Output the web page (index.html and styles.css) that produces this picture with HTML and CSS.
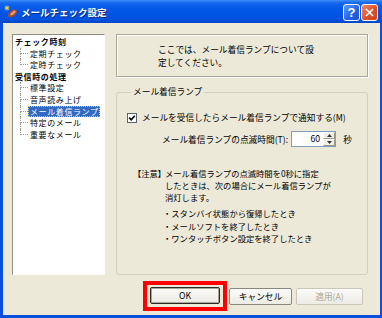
FILE: index.html
```html
<!DOCTYPE html>
<html lang="ja">
  <head>
    <meta charset="UTF-8" />
    <title>メールチェック設定</title>
    <link rel="stylesheet" href="styles.css">
  </head>
  <body>
    <div class="window">
      <div class="titlebar">
        <svg class="app-icon" width="14" height="14" viewBox="0 0 14 14">
          <ellipse cx="8.5" cy="8.5" rx="5.2" ry="3" transform="rotate(-40 8.5 8.5)" fill="#a8492a" />
          <ellipse cx="9" cy="8" rx="3.2" ry="1.3" transform="rotate(-40 9 8)" fill="#f19a68" />
          <path d="M3 0.5v5M0.5 3h5M1.2 1.2l3.6 3.6M4.8 1.2l-3.6 3.6" stroke="#ffe23a" stroke-width="0.9" />
        </svg>
        <span class="title">メールチェック設定</span>
        <div class="caption-buttons">
          <span class="cap-btn help">?</span>
          <span class="cap-btn close">
            <svg width="9" height="9" viewBox="0 0 9 9"><path d="M1 1l7 7M8 1l-7 7" stroke="#fff" stroke-width="1.7" /></svg>
          </span>
        </div>
      </div>

      <div class="face">
        <div class="main">
          <!-- left tree -->
          <ul class="tree">
            <li>
              <span class="root">チェック時刻</span>
              <ul class="children">
                <li>定期チェック</li>
                <li>定時チェック</li>
              </ul>
            </li>
            <li>
              <span class="root">受信時の処理</span>
              <ul class="children">
                <li>標準設定</li>
                <li>音声読み上げ</li>
                <li><span class="selected">メール着信ランプ</span></li>
                <li>特定のメール</li>
                <li>重要なメール</li>
              </ul>
            </li>
          </ul>

          <div class="panel">
            <div class="intro">ここでは、メール着信ランプについて設<br>定してください。</div>

            <fieldset class="group">
              <legend>メール着信ランプ</legend>
              <label class="check-row">
                <svg class="checkbox" width="10" height="10" viewBox="0 0 10 10">
                  <rect x="0.5" y="0.5" width="9" height="9" fill="#fff" stroke="#5a6470" />
                  <path d="M2.2 4.6l2 2.1 3.6-4" fill="none" stroke="#000" stroke-width="1.6" />
                </svg>
                メールを受信したらメール着信ランプで通知する(M)
              </label>

              <div class="time-row">
                <span>メール着信ランプの点滅時間(T):</span>
                <span class="spin">
                  <span class="spin-value">60</span>
                  <span class="spin-buttons">
                    <span class="spin-btn"><svg width="5" height="3" viewBox="0 0 5 3"><path d="M0 3L2.5 0 5 3z" fill="#333" /></svg></span>
                    <span class="spin-btn"><svg width="5" height="3" viewBox="0 0 5 3"><path d="M0 0L2.5 3 5 0z" fill="#333" /></svg></span>
                  </span>
                </span>
                <span class="unit">秒</span>
              </div>

              <div class="note">
                <span class="note-label">【注意】</span>
                <p>メール着信ランプの点滅時間を0秒に指定<br>したときは、次の場合にメール着信ランプが<br>消灯します。</p>
              </div>

              <p class="cases">・スタンバイ状態から復帰したとき<br>・メールソフトを終了したとき<br>・ワンタッチボタン設定を終了したとき</p>
            </fieldset>
          </div>
        </div>

        <div class="actions">
          <span class="mark">
            <button class="btn default">OK</button>
          </span>
          <button class="btn cancel">キャンセル</button>
          <button class="btn apply" disabled>適用(A)</button>
        </div>
      </div>
    </div>
  </body>
</html>
```

FILE: styles.css
```css
body {
  margin: 0;
  font-family: "Noto Sans CJK JP", "Noto Sans", sans-serif;
  color: #000;
}
.window {
  width: 382px;
  height: 318px;
  background: #0a4fd9;
  display: flex;
  flex-direction: column;
}
.titlebar {
  height: 23px;
  flex: none;
  display: flex;
  align-items: center;
  padding: 0 4px 0 4px;
  box-sizing: border-box;
  background: linear-gradient(to bottom, #3d8ff6 0, #1567ee 3px, #0459e7 8px, #0055e4 60%, #0251dd 85%, #0447c8 100%);
}
.app-icon {
  flex: none;
  margin-right: 3px;
}
.title {
  color: #fff;
  font-weight: bold;
  font-size: 9.5px;
  line-height: 14px;
  text-shadow: 1px 1px 0 #0b2a8a;
}
.caption-buttons {
  margin-left: auto;
  display: flex;
  gap: 1px;
  padding-top: 2px;
}
.cap-btn {
  width: 17px;
  height: 17px;
  box-sizing: border-box;
  border: 1px solid #fff;
  border-radius: 3px;
  display: flex;
  align-items: center;
  justify-content: center;
}
.help {
  background: linear-gradient(135deg, #5b9cfb, #2360e6 60%, #1e4fd0);
  color: #fff;
  font-family: "Liberation Sans", sans-serif;
  font-weight: bold;
  font-size: 13px;
  line-height: 15px;
}
.close {
  background: linear-gradient(135deg, #f08a62, #e0502a 55%, #c8401c);
}

/* dialog face */
.face {
  flex: 1;
  margin: 0 2px 3px 3px;
  background: #ece9d8;
  padding: 11px 12px 0 9px;
  display: flex;
  flex-direction: column;
}
.main {
  display: flex;
  gap: 11px;
  height: 241px;
}

/* tree view */
.tree {
  list-style: none;
  margin: 0;
  width: 93px;
  box-sizing: border-box;
  padding: 1px 0 0 2px;
  background: #fff;
  border: 1px solid;
  border-color: #8f8d80 #fcfcfa #fcfcfa #8f8d80;
  font-size: 8px;
  line-height: 11.6px;
  letter-spacing: 0.6px;
  white-space: nowrap;
}
.root {
  font-weight: bold;
}
.children {
  list-style: none;
  margin: 0 0 0 5px;
  padding: 0;
}
.children li {
  position: relative;
  padding-left: 10px;
}
.children li::before {
  content: "";
  position: absolute;
  left: 0;
  top: 0;
  width: 7px;
  height: 5px;
  border-left: 1px dotted #a09e94;
  border-bottom: 1px dotted #a09e94;
}
.children li:not(:last-child)::after {
  content: "";
  position: absolute;
  left: 0;
  top: 6px;
  bottom: 0;
  border-left: 1px dotted #a09e94;
}
.selected {
  display: inline-block;
  margin-left: -2px;
  padding: 0 1px 0 2px;
  background: #316ac5;
  color: #fff;
  outline: 1px dotted #e8c878;
  outline-offset: -1px;
}

/* right panel */
.panel {
  width: 252px;
  display: flex;
  flex-direction: column;
  font-size: 8.7px;
}
.intro {
  height: 43px;
  box-sizing: border-box;
  padding: 9px 0 0 41px;
  line-height: 12.6px;
  border: 1px solid #aca899;
  box-shadow: inset 1px 1px 0 #fff, 1px 1px 0 #fff;
}
.group {
  flex: 1;
  margin: 9px 0 0 0;
  padding: 14px 0 0 10px;
  border: 1px solid #d0d0bf;
  border-radius: 3px;
  min-width: 0;
}
.group legend {
  margin-left: 4px;
  padding: 0 2px;
  line-height: 12.6px;
}
.check-row {
  display: flex;
  align-items: center;
  gap: 5px;
  line-height: 12.6px;
  margin-top: -1px;
}
.time-row {
  display: flex;
  align-items: center;
  margin: 7px 0 0 35px;
  height: 16px;
}
.spin {
  display: flex;
  margin-left: 3px;
  height: 16px;
  border: 1px solid #7f9db9;
  background: #fff;
  box-sizing: border-box;
}
.spin-value {
  width: 31px;
  box-sizing: border-box;
  text-align: right;
  padding-right: 3px;
  line-height: 14px;
}
.spin-buttons {
  display: flex;
  flex-direction: column;
  width: 12px;
}
.spin-btn {
  flex: 1;
  display: flex;
  align-items: center;
  justify-content: center;
  background: #f2f0e6;
  border: 1px solid;
  border-color: #fff #9a988a #9a988a #fff;
}
.unit {
  margin-left: 7px;
}
.note {
  display: flex;
  margin: 20px 0 0 10px;
  font-size: 8.3px;
  line-height: 12.1px;
}
.note-label {
  font-feature-settings: "palt";
  width: 28px;
  flex: none;
}
.note p {
  margin: 0;
}
.cases {
  margin: 4px 0 0 0;
  padding: 0 0 0 36px;
  font-size: 8.3px;
  line-height: 12.1px;
}

/* buttons */
.actions {
  display: flex;
  justify-content: flex-end;
  align-items: center;
  margin: 6px 5px 0 0;
}
.mark {
  display: flex;
  border: 4px solid #ff0000;
  padding: 2px 3px 3px 3px;
}
.btn {
  height: 17px;
  padding: 0;
  font-family: inherit;
  font-size: 8.7px;
  line-height: 15px;
  color: #000;
  background: linear-gradient(to bottom, #fbfbf9, #ecebe4);
  border: 1px solid #8a887c;
  border-radius: 2px;
  box-sizing: border-box;
}
.default {
  width: 70px;
  border-color: #2a2a26;
  box-shadow: inset 0 0 0 1px #a8a698;
}
.cancel {
  width: 63px;
  margin-left: 2px;
}
.apply {
  width: 67px;
  margin-left: 4px;
  color: #aca899;
  border-color: #c9c7ba;
}
```
